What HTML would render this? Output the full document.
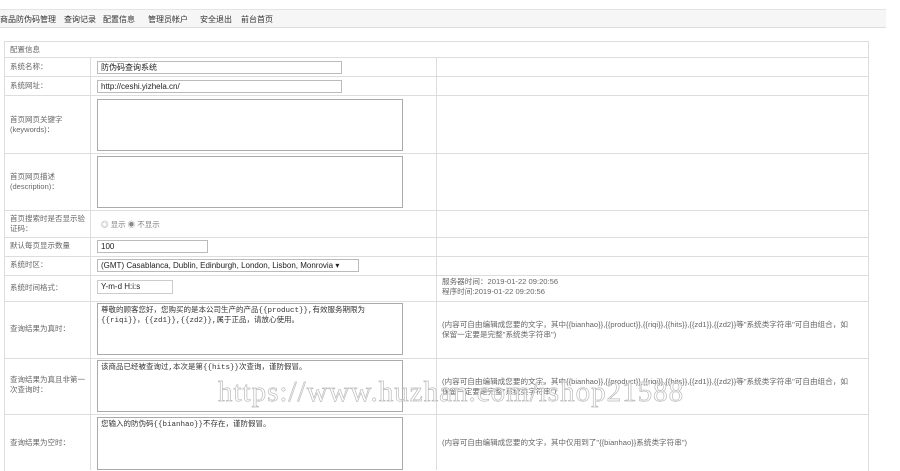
<!DOCTYPE html><html><head><meta charset="utf-8"><style>
body{margin:0;width:900px;height:470px;background:#fff;font-family:"Liberation Sans","Noto Sans CJK SC",sans-serif;font-size:8px;color:#555;position:relative;overflow:hidden}
.a{position:absolute}
.nav{left:0;top:9px;width:886px;height:17px;background:#f6f6f6;border-top:1px solid #e4e4e4;border-bottom:1px solid #ddd}
.nav span{position:absolute;top:4px;font-size:8px;color:#333}
.h{left:4px;width:865px;height:1px;background:#ddd}
.v{width:1px;background:#ddd}
.lab{left:10px;font-size:7.5px;color:#666;line-height:10px}
.in{border:1px solid #bbb;background:#fff;font-size:8px;color:#222;padding-left:3px;box-sizing:border-box;line-height:11px}
.ta{border:1px solid #aaa;background:#fff;box-sizing:border-box;font-family:"Liberation Mono","Noto Sans CJK SC",monospace;font-size:7.5px;color:#333;padding:2px 3px;line-height:10px}
.note{left:442px;font-size:7.6px;color:#666;line-height:10px;white-space:nowrap}
</style></head><body>
<div class="a nav"><span style="left:0">商品防伪码管理</span><span style="left:64px">查询记录</span><span style="left:103px">配置信息</span><span style="left:148px">管理员帐户</span><span style="left:200px">安全退出</span><span style="left:241px">前台首页</span></div>
<div class="a h" style="top:41px"></div>
<div class="a v" style="left:4px;top:41px;height:430px"></div>
<div class="a v" style="left:868px;top:41px;height:430px"></div>
<div class="a v" style="left:90px;top:57px;height:413px"></div>
<div class="a v" style="left:436px;top:57px;height:413px"></div>
<div class="a h" style="top:57px"></div><div class="a h" style="top:76px"></div><div class="a h" style="top:95px"></div><div class="a h" style="top:153px"></div><div class="a h" style="top:210px"></div><div class="a h" style="top:237px"></div><div class="a h" style="top:256px"></div><div class="a h" style="top:275px"></div><div class="a h" style="top:301px"></div><div class="a h" style="top:358px"></div><div class="a h" style="top:414px"></div>
<div class="a lab" style="top:45px">配置信息</div>
<div class="a lab" style="top:62px">系统名称：</div>
<div class="a lab" style="top:81px">系统网址：</div>
<div class="a lab" style="top:115px">首页网页关键字<br>(keywords)：</div>
<div class="a lab" style="top:172px">首页网页描述<br>(description)：</div>
<div class="a lab" style="top:214px">首页搜索时是否显示验<br>证码：</div>
<div class="a lab" style="top:241px">默认每页显示数量</div>
<div class="a lab" style="top:260px">系统时区：</div>
<div class="a lab" style="top:283px">系统时间格式：</div>
<div class="a lab" style="top:324px">查询结果为真时：</div>
<div class="a lab" style="top:375px">查询结果为真且非第一<br>次查询时：</div>
<div class="a lab" style="top:438px">查询结果为空时：</div>
<div class="a in" style="left:97px;top:61px;width:245px;height:13px">防伪码查询系统</div>
<div class="a in" style="left:97px;top:80px;width:245px;height:13px">http://ceshi.yizhela.cn/</div>
<div class="a ta" style="left:97px;top:99px;width:306px;height:52px"></div>
<div class="a ta" style="left:97px;top:156px;width:306px;height:52px"></div>
<div class="a" style="left:101px;top:219px;font-size:7.5px;color:#888">◎ 显示 ◉ 不显示</div>
<div class="a in" style="left:97px;top:240px;width:111px;height:13px">100</div>
<div class="a in" style="left:97px;top:259px;width:262px;height:13px">(GMT) Casablanca, Dublin, Edinburgh, London, Lisbon, Monrovia ▾</div>
<div class="a in" style="left:97px;top:280px;width:76px;height:14px;border-color:#ccc">Y-m-d H:i:s</div>
<div class="a ta" style="left:97px;top:303px;width:306px;height:52px">尊敬的顾客您好，您购买的是本公司生产的产品{{product}},有效服务期限为{{riqi}}，{{zd1}},{{zd2}},属于正品，请放心使用。</div>
<div class="a ta" style="left:97px;top:360px;width:306px;height:52px">该商品已经被查询过,本次是第{{hits}}次查询，谨防假冒。</div>
<div class="a ta" style="left:97px;top:417px;width:306px;height:53px">您输入的防伪码{{bianhao}}不存在，谨防假冒。</div>
<div class="a note" style="top:277px">服务器时间：2019-01-22 09:20:56<br>程序时间:2019-01-22 09:20:56</div>
<div class="a note" style="top:320px">(内容可自由编辑成您要的文字，其中{{bianhao}},{{product}},{{riqi}},{{hits}},{{zd1}},{{zd2}}等"系统类字符串"可自由组合，如<br>保留一定要是完整"系统类字符串")</div>
<div class="a note" style="top:377px">(内容可自由编辑成您要的文字，其中{{bianhao}},{{product}},{{riqi}},{{hits}},{{zd1}},{{zd2}}等"系统类字符串"可自由组合，如<br>保留一定要是完整"系统类字符串")</div>
<div class="a note" style="top:438px">(内容可自由编辑成您要的文字，其中仅用到了"{{bianhao}}系统类字符串")</div>
<div class="a" style="left:218px;top:376px;font-family:'Liberation Serif',serif;font-size:29px;color:rgba(255,255,255,0.6);-webkit-text-stroke:0.7px #bbb;letter-spacing:1px;white-space:nowrap">https://www.huzhan.com/ishop21588</div>
</body></html>
